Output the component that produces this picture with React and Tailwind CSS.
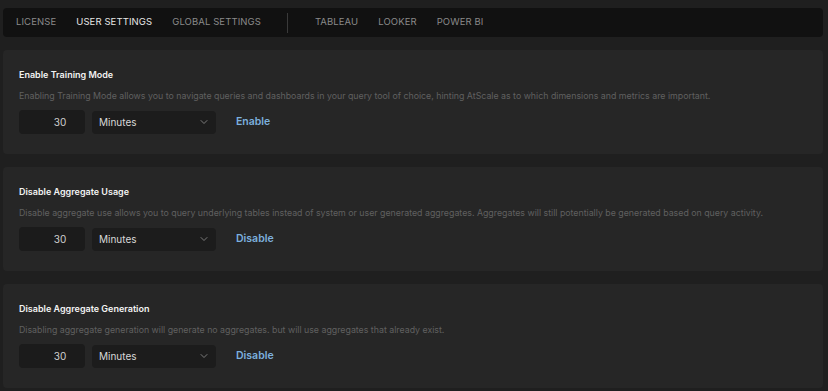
import React, { useState } from 'react'
import { ChevronDown } from 'lucide-react'

const tabs = ['LICENSE', 'USER SETTINGS', 'GLOBAL SETTINGS']
const tools = ['TABLEAU', 'LOOKER', 'POWER BI']

const settings = [
    {
        title: 'Enable Training Mode',
        desc: 'Enabling Training Mode allows you to navigate queries and dashboards in your query tool of choice, hinting AtScale as to which dimensions and metrics are important.',
        action: 'Enable',
    },
    {
        title: 'Disable Aggregate Usage',
        desc: 'Disable aggregate use allows you to query underlying tables instead of system or user generated aggregates. Aggregates will still potentially be generated based on query activity.',
        action: 'Disable',
    },
    {
        title: 'Disable Aggregate Generation',
        desc: 'Disabling aggregate generation will generate no aggregates. but will use aggregates that already exist.',
        action: 'Disable',
    },
]

const SettingCard = ({ title, desc, action }) => {
    const [amount, setAmount] = useState('30')

    return (
        <div className="rounded-sm bg-[#262626] px-4 pt-[19px] h-[104px]">
            <div className="text-[9px] font-semibold leading-[12px] text-[#f2f2f2]">{title}</div>
            <div className="mt-[9px] text-[8.8px] leading-[12px] text-[#606060] whitespace-nowrap">{desc}</div>
            <div className="mt-[8px] flex items-center">
                <input
                    value={amount}
                    onChange={(e) => setAmount(e.target.value)}
                    className="h-[24px] w-[66px] rounded-sm bg-[#1b1b1b] pl-4 text-center text-[10px] text-[#d0d0d0] outline-none"
                />
                <div className="ml-[7px] flex h-[23px] w-[124px] items-center justify-between rounded-sm bg-[#1c1c1c] pl-[7px] pr-[6px] text-[10px] text-[#d8d8d8]">
                    <span>Minutes</span>
                    <ChevronDown className="h-3 w-3 text-[#9a9a9a]" strokeWidth={1.5} />
                </div>
                <button className="ml-[20px] text-[10.5px] font-semibold text-[#7cb0de]">{action}</button>
            </div>
        </div>
    )
}

export default function App() {
    return (
        <div className="min-h-[391px] w-full bg-[#1f1f1f] px-[3px] pt-[8px] pr-[5px] font-['Inter',sans-serif]">
            <div className="flex h-[29px] items-center rounded-sm bg-[#111111] pl-[13px] text-[9.5px] tracking-[0.1px]">
                {tabs.map((t) => (
                    <span key={t} className={`mr-[20px] ${t === 'USER SETTINGS' ? 'text-[#e6e6e6]' : 'text-[#8a8a8a]'}`}>
                        {t}
                    </span>
                ))}
                <div className="ml-[6px] mr-[27px] h-[20px] w-px bg-[#3a3a3a]" />
                {tools.map((t) => (
                    <span key={t} className="mr-[20px] text-[#8a8a8a]">{t}</span>
                ))}
            </div>
            <div className="mt-[13px] flex flex-col gap-[13px]">
                {settings.map((s) => (
                    <SettingCard key={s.title} {...s} />
                ))}
            </div>
        </div>
    )
}
